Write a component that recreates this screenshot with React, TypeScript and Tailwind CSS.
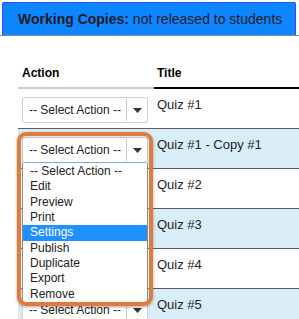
const quizzes = ['Quiz #1', 'Quiz #1 - Copy #1', 'Quiz #2', 'Quiz #3', 'Quiz #4', 'Quiz #5'];
const actions = ['-- Select Action --', 'Edit', 'Preview', 'Print', 'Settings', 'Publish', 'Duplicate', 'Export', 'Remove'];

function ActionSelect({ focused }: { focused?: boolean }) {
  return (
    <div
      className={
        'flex h-[26px] w-[126px] items-stretch rounded-[3px] border bg-white ' +
        (focused ? 'border-[#c4c4c4] border-b-[#7fa9dc]' : 'border-[#cfcfcf]')
      }
    >
      <div className="flex flex-1 items-center pl-[6px] text-[12px] leading-none">-- Select Action --</div>
      <div className="my-[1px] w-px bg-[#c8c8c8]" />
      <div className="flex w-[20px] items-center justify-center">
        <svg width="9" height="5" viewBox="0 0 9 5">
          <path d="M0 0h9L4.5 5z" fill="#333" />
        </svg>
      </div>
    </div>
  );
}

export default function App() {
  // rows 3-5 have their selects hidden under the open list
  const covered = (i: number) => i >= 2 && i <= 4;
  return (
    <div className="relative h-[319px] w-[299px] overflow-hidden bg-white font-['Liberation_Sans',Arial,sans-serif] text-[#222]">
      <div className="border-b border-[#858585]">
        <div className="ml-[2px] mr-[3px] mt-[2px] flex h-[33px] items-center rounded-t-[2px] border border-b-0 border-[#2250ff] bg-[#0d86ff] pl-[15px] text-[14px] text-[#1c1c1c]">
          <span className="font-bold">Working Copies:</span>
          <span>&nbsp;not released to students</span>
        </div>
      </div>

      <div className="ml-[18px] mt-[22px]">
        <div className="flex h-[31px] items-start text-[12px] font-bold leading-4 text-black">
          <div className="h-full w-[136px] border-b-2 border-[#cccccc] pl-[4px] pt-[7px]">Action</div>
          <div className="h-full flex-1 border-b-2 border-black pl-[3px] pt-[7px]">Title</div>
        </div>
        {quizzes.map((q, i) => (
          <div
            key={q}
            className={'flex h-[40px] border-b border-[#5e5e5e] ' + (i % 2 === 1 ? 'bg-[#d9edf7]' : 'bg-white')}
          >
            <div className="w-[136px] pl-[4px] pt-[8px]">
              {!covered(i) && <ActionSelect focused={i === 1} />}
            </div>
            <div className="flex-1 pl-[3px] pt-[8px] text-[13px] leading-4">{q}</div>
          </div>
        ))}
      </div>

      <div className="absolute left-[22px] top-[163px] w-[126px] border-x border-b border-[#8a8a8a] bg-white py-px text-[12px]">
        {actions.map((a) => (
          <div
            key={a}
            className={
              'h-[15.33px] pl-[7px] leading-[15.33px] ' + (a === 'Settings' ? 'bg-[#1e90ff] text-white' : '')
            }
          >
            {a}
          </div>
        ))}
      </div>

      <div className="pointer-events-none absolute left-[16.5px] top-[132px] h-[174px] w-[136px] rounded-[9px] border-4 border-[#e07b39] shadow-[0_1px_3px_rgba(0,0,0,0.35)]" />
    </div>
  );
}
